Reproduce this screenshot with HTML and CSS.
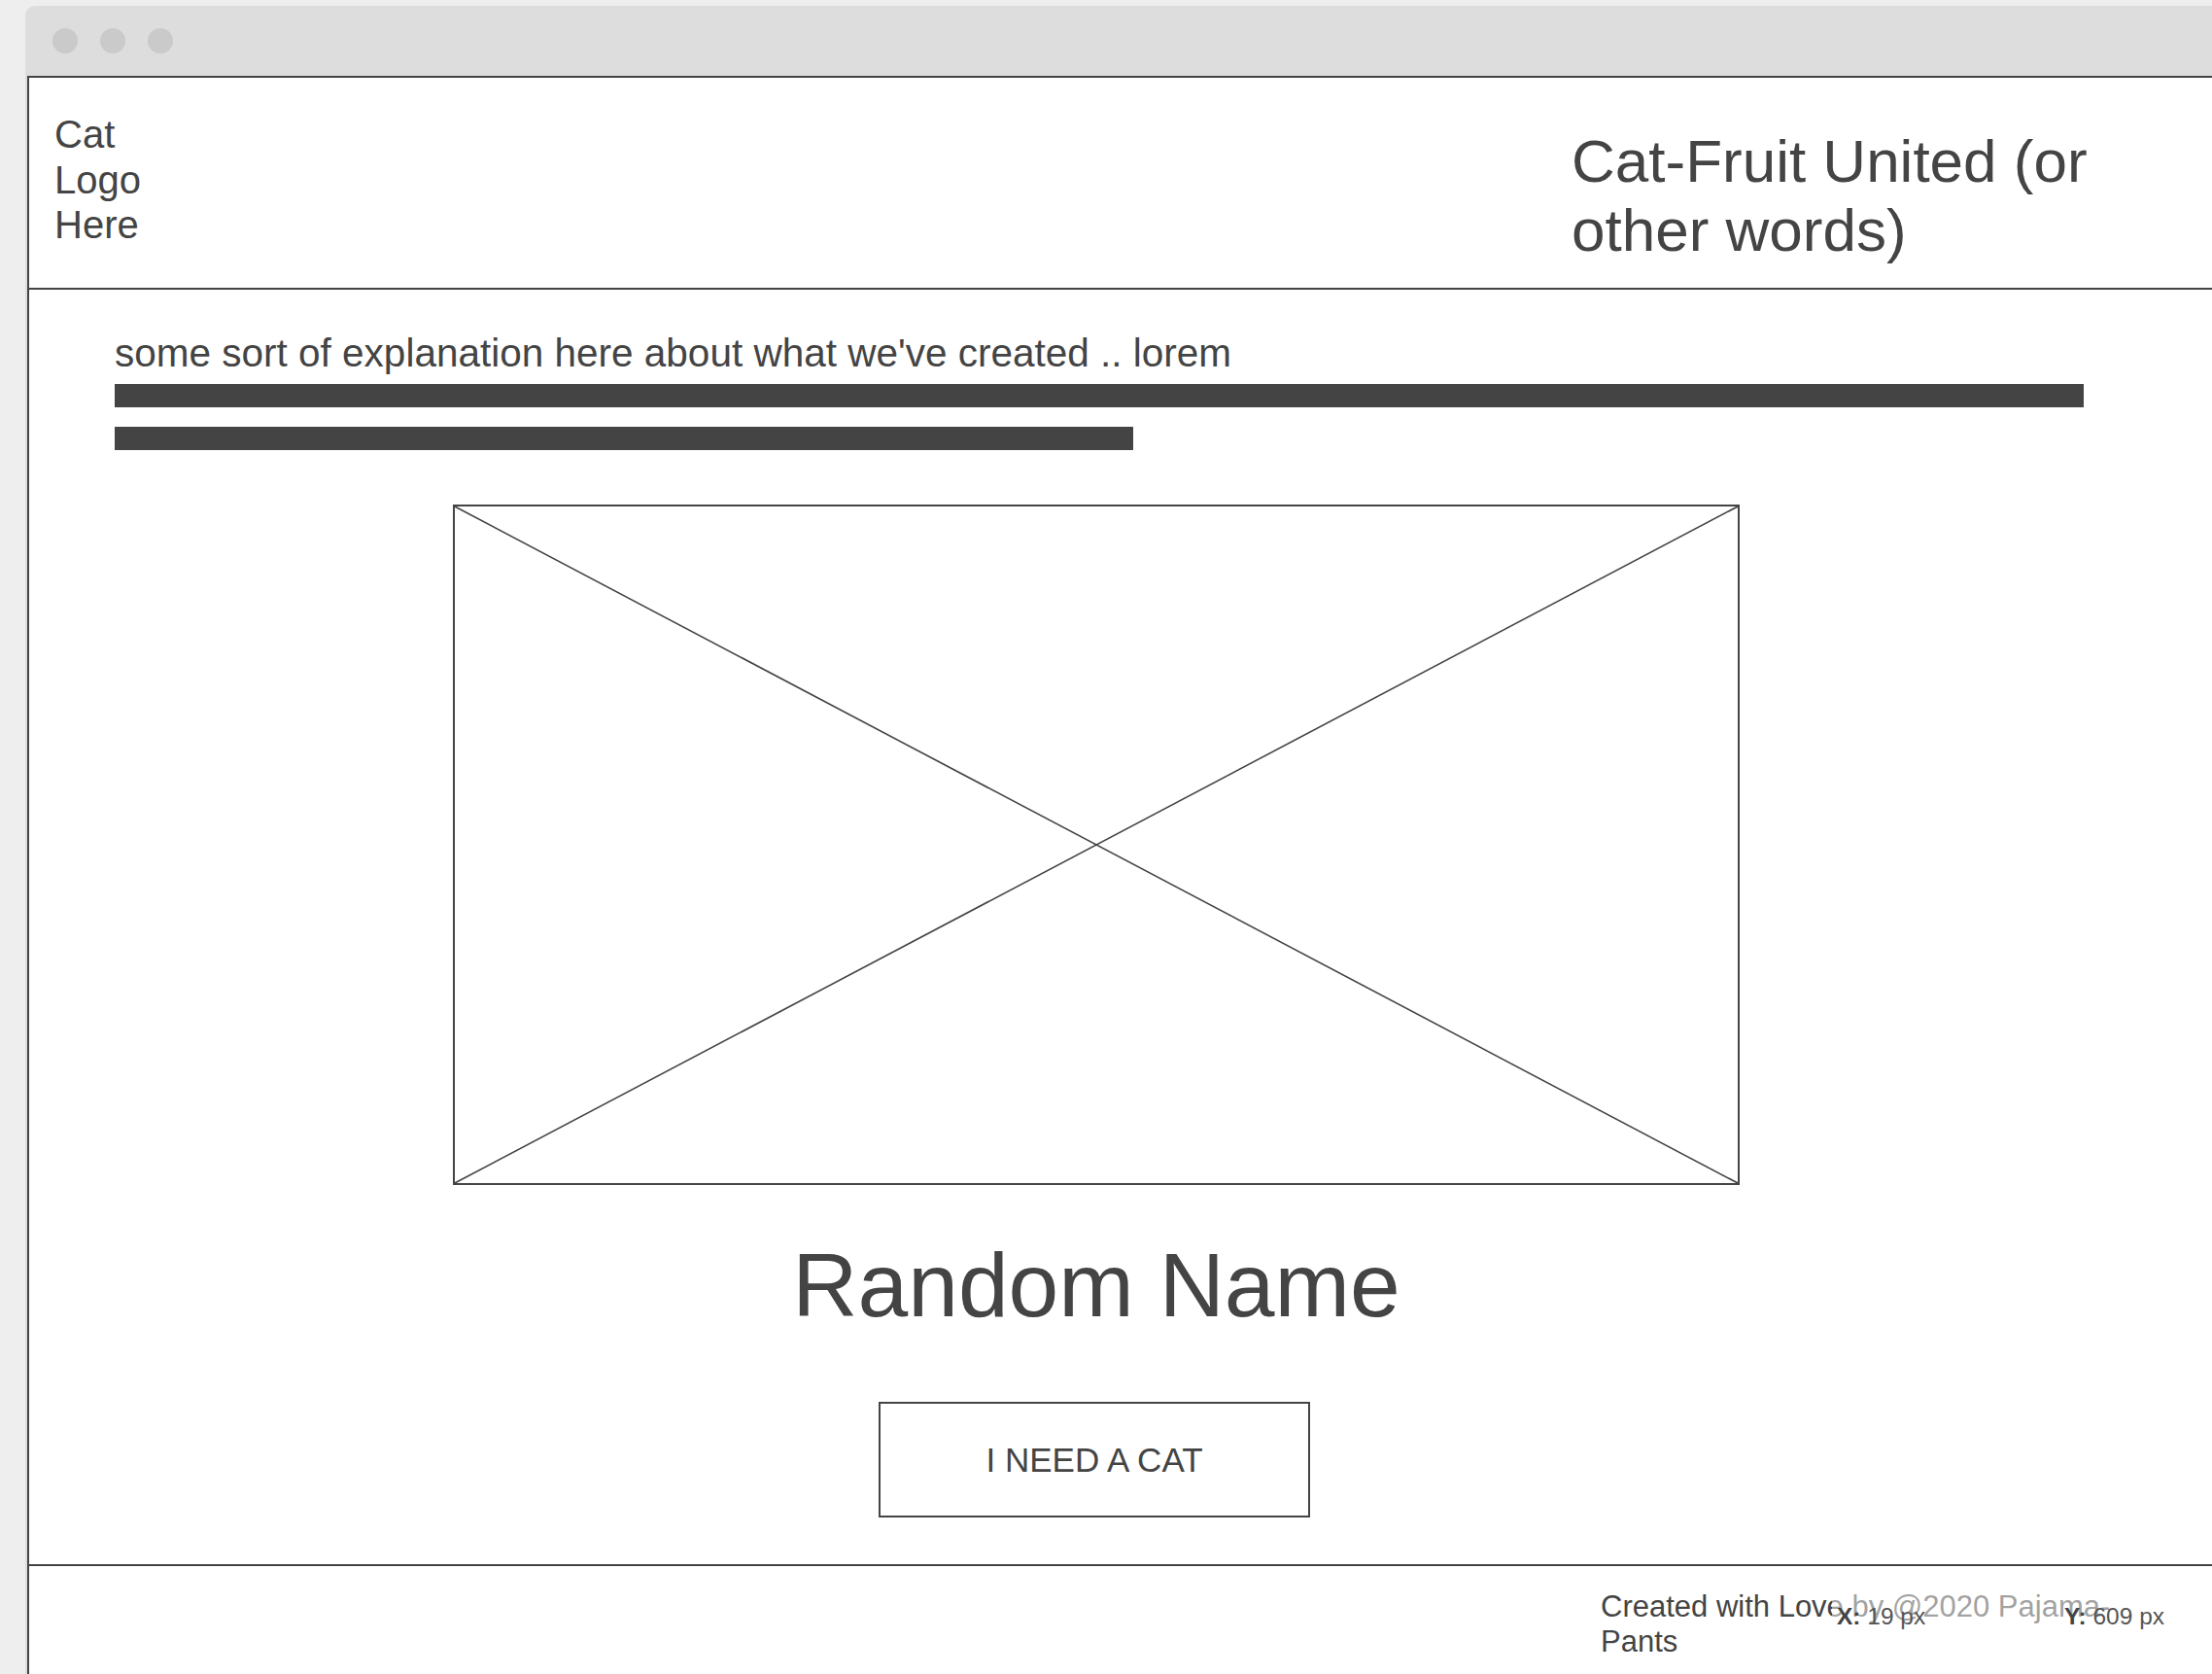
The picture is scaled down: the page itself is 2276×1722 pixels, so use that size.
FILE: index.html
```html
<!DOCTYPE html>
<html lang="en">
<head>
<meta charset="utf-8">
<title>Cat-Fruit United wireframe</title>
<link rel="stylesheet" href="styles.css">
</head>
<body>
<div class="window">
  <div class="titlebar">
    <span class="dot"></span><span class="dot"></span><span class="dot"></span>
  </div>
  <div class="page">
    <header class="header">
      <div class="logo">Cat<br>Logo<br>Here</div>
      <div class="title">Cat-Fruit United (or other words)</div>
    </header>
    <main class="main">
      <div class="content">
        <p class="intro">some sort of explanation here about what we've created .. lorem</p>
        <div class="bar bar-long"></div>
        <div class="bar bar-short"></div>
        <div class="placeholder">
          <svg class="cross" viewBox="0 0 100 100" preserveAspectRatio="none">
            <line x1="0" y1="0" x2="100" y2="100" vector-effect="non-scaling-stroke"/>
            <line x1="100" y1="0" x2="0" y2="100" vector-effect="non-scaling-stroke"/>
          </svg>
        </div>
        <h1 class="name">Random Name</h1>
        <button class="cta">I NEED A CAT</button>
      </div>
    </main>
    <footer class="footer">
      <div class="credit">Created with Love by @2020 Pajama-Pants</div>
      <div class="coords">
        <span class="coord"><b>X:</b> 19 px</span>
        <span class="coord"><b>Y:</b> 609 px</span>
      </div>
    </footer>
  </div>
</div>
</body>
</html>
```
FILE: styles.css
```css
html, body {
  margin: 0;
  padding: 0;
}
body {
  background: #eeeeee;
  width: 2276px;
  height: 1722px;
  overflow: hidden;
  font-family: "Liberation Sans", Arial, sans-serif;
  color: #444444;
}
.window {
  margin: 6px 0 0 26px;
  background: #dddddd;
  border-radius: 10px 0 0 0;
  height: 1716px;
}
.titlebar {
  height: 72px;
  display: flex;
  align-items: center;
  padding-left: 28px;
  gap: 23px;
  box-sizing: border-box;
}
.dot {
  width: 26px;
  height: 26px;
  border-radius: 50%;
  background: #cacaca;
}
.page {
  margin-left: 2px;
  background: #ffffff;
  border-left: 2px solid #444444;
  border-top: 2px solid #444444;
  height: 1642px;
  display: flex;
  flex-direction: column;
}
.header {
  height: 216px;
  border-bottom: 2px solid #444444;
  display: flex;
  align-items: flex-start;
  padding-left: 26px;
}
.logo {
  flex: 0 0 1561px;
  font-size: 40px;
  line-height: 46.5px;
  padding-top: 35px;
}
.title {
  width: 600px;
  font-size: 62px;
  padding-top: 50px;
}
.main {
  padding: 42px 0 48px 88px;
}
.content {
  width: 2020px;
  display: flex;
  flex-direction: column;
  align-items: center;
}
.intro {
  align-self: flex-start;
  margin: 0;
  font-size: 40.5px;
}
.bar {
  align-self: flex-start;
  height: 24px;
  background: #444444;
}
.bar-long {
  width: 2026px;
  margin-top: 8px;
}
.bar-short {
  width: 1048px;
  margin-top: 20px;
}
.placeholder {
  margin-top: 56px;
  width: 1324px;
  height: 700px;
  box-sizing: border-box;
  border: 2px solid #444444;
}
.cross {
  display: block;
  width: 100%;
  height: 100%;
}
.cross line {
  stroke: #444444;
  stroke-width: 1.6;
}
.name {
  margin: 50px 0 0;
  font-size: 93px;
  font-weight: normal;
  line-height: normal;
}
.cta {
  margin-top: 66px;
  width: 444px;
  height: 119px;
  background: #ffffff;
  border: 2px solid #444444;
  font-family: "Liberation Sans", Arial, sans-serif;
  font-size: 35px;
  color: #444444;
  padding: 0;
  margin-left: -4px;
}
.footer {
  position: relative;
  flex: 1;
  border-top: 2px solid #444444;
  padding: 24px 0 0 1617px;
}
.credit {
  width: 560px;
  font-size: 31px;
}
.coords {
  position: absolute;
  left: 1855px;
  top: 22px;
  right: 0;
  height: 60px;
  box-sizing: border-box;
  padding: 16px 0 0 5px;
  background: rgba(255, 255, 255, 0.5);
  display: flex;
  font-size: 24.5px;
  color: #555555;
  white-space: nowrap;
}
.coord {
  flex: 0 0 234px;
}
.coord b {
  color: #444444;
}
```
